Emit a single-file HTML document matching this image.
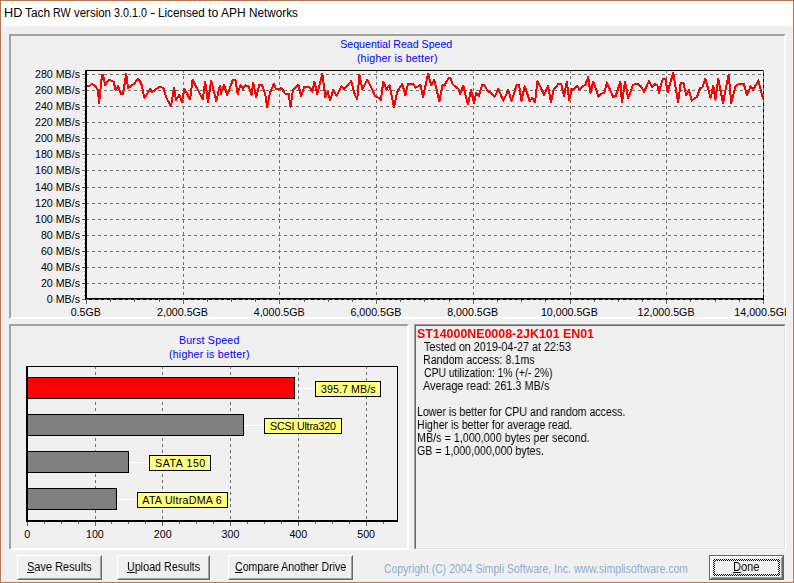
<!DOCTYPE html>
<html><head><meta charset="utf-8"><title>HD Tach RW version 3.0.1.0 - Licensed to APH Networks</title>
<style>
html,body{margin:0;padding:0}
body{width:794px;height:583px;position:relative;overflow:hidden;background:#f0f0f0;font-family:'Liberation Sans', sans-serif;}
div{position:absolute;box-sizing:border-box}
.t{white-space:pre;transform-origin:0 50%;}
u{text-decoration:underline;text-underline-offset:1px;text-decoration-thickness:1px}
#frame{left:0;top:0;width:794px;height:583px;border:1px solid #b97454;}
#halo{left:1px;top:26px;width:792px;height:556px;border:1px solid #f0f4f6;border-top:none}
#titlebar{left:1px;top:1px;width:792px;height:25px;background:#fff}
.panel{border-style:solid;border-width:2px;border-color:#a0a0a0 #fff #fff #a0a0a0}
.sunk{border-style:solid;border-width:1px;border-color:#a0a0a0 #fff #fff #a0a0a0}
.sunk>i{position:absolute;left:0;top:0;right:0;bottom:0;border-style:solid;border-width:1px;border-color:#696969 #e3e3e3 #e3e3e3 #696969}
svg{position:absolute;left:0;top:0}
.g{stroke:#707070;stroke-width:1;stroke-dasharray:3 3;shape-rendering:crispEdges}
.k{stroke:#666;stroke-width:1;shape-rendering:crispEdges}
.m{stroke:#909090;stroke-width:1;shape-rendering:crispEdges}
.bk{background:#000}
.bar{height:22px;border:1px solid #000;border-left:none}
.conn{height:1px;background:#fff}
.lbl{height:16px;border:1px solid #000;background:#ffff80}
.btn{border-style:solid;border-width:1px;border-color:#fff #696969 #696969 #fff;}
.btn>i{position:absolute;left:0;top:0;right:0;bottom:0;border-style:solid;border-width:1px;border-color:#f0f0f0 #a0a0a0 #a0a0a0 #f0f0f0}
</style></head><body>
<div id="titlebar"></div>
<div id="halo"></div>
<div id="frame"></div>

<div class="panel" style="left:9px;top:34px;width:777px;height:285px"></div>
<div class="panel" style="left:9px;top:324px;width:400px;height:226px"></div>
<div class="sunk" style="left:414px;top:324px;width:372px;height:226px"><i></i></div>

<svg width="794" height="583" viewBox="0 0 794 583">
<line x1="86" y1="74.5" x2="764" y2="74.5" class="g"/>
<line x1="82" y1="74.5" x2="85" y2="74.5" class="k"/>
<line x1="84" y1="78.5" x2="85" y2="78.5" class="m"/>
<line x1="84" y1="82.5" x2="85" y2="82.5" class="m"/>
<line x1="84" y1="86.5" x2="85" y2="86.5" class="m"/>
<line x1="86" y1="90.5" x2="764" y2="90.5" class="g"/>
<line x1="82" y1="90.5" x2="85" y2="90.5" class="k"/>
<line x1="84" y1="94.5" x2="85" y2="94.5" class="m"/>
<line x1="84" y1="98.5" x2="85" y2="98.5" class="m"/>
<line x1="84" y1="102.5" x2="85" y2="102.5" class="m"/>
<line x1="86" y1="106.5" x2="764" y2="106.5" class="g"/>
<line x1="82" y1="106.5" x2="85" y2="106.5" class="k"/>
<line x1="84" y1="110.5" x2="85" y2="110.5" class="m"/>
<line x1="84" y1="114.5" x2="85" y2="114.5" class="m"/>
<line x1="84" y1="118.5" x2="85" y2="118.5" class="m"/>
<line x1="86" y1="122.5" x2="764" y2="122.5" class="g"/>
<line x1="82" y1="122.5" x2="85" y2="122.5" class="k"/>
<line x1="84" y1="126.5" x2="85" y2="126.5" class="m"/>
<line x1="84" y1="130.5" x2="85" y2="130.5" class="m"/>
<line x1="84" y1="134.5" x2="85" y2="134.5" class="m"/>
<line x1="86" y1="138.5" x2="764" y2="138.5" class="g"/>
<line x1="82" y1="138.5" x2="85" y2="138.5" class="k"/>
<line x1="84" y1="142.5" x2="85" y2="142.5" class="m"/>
<line x1="84" y1="146.5" x2="85" y2="146.5" class="m"/>
<line x1="84" y1="150.5" x2="85" y2="150.5" class="m"/>
<line x1="86" y1="154.5" x2="764" y2="154.5" class="g"/>
<line x1="82" y1="154.5" x2="85" y2="154.5" class="k"/>
<line x1="84" y1="158.5" x2="85" y2="158.5" class="m"/>
<line x1="84" y1="162.5" x2="85" y2="162.5" class="m"/>
<line x1="84" y1="166.5" x2="85" y2="166.5" class="m"/>
<line x1="86" y1="170.5" x2="764" y2="170.5" class="g"/>
<line x1="82" y1="170.5" x2="85" y2="170.5" class="k"/>
<line x1="84" y1="175.5" x2="85" y2="175.5" class="m"/>
<line x1="84" y1="179.5" x2="85" y2="179.5" class="m"/>
<line x1="84" y1="183.5" x2="85" y2="183.5" class="m"/>
<line x1="86" y1="187.5" x2="764" y2="187.5" class="g"/>
<line x1="82" y1="187.5" x2="85" y2="187.5" class="k"/>
<line x1="84" y1="191.5" x2="85" y2="191.5" class="m"/>
<line x1="84" y1="195.5" x2="85" y2="195.5" class="m"/>
<line x1="84" y1="199.5" x2="85" y2="199.5" class="m"/>
<line x1="86" y1="203.5" x2="764" y2="203.5" class="g"/>
<line x1="82" y1="203.5" x2="85" y2="203.5" class="k"/>
<line x1="84" y1="207.5" x2="85" y2="207.5" class="m"/>
<line x1="84" y1="211.5" x2="85" y2="211.5" class="m"/>
<line x1="84" y1="215.5" x2="85" y2="215.5" class="m"/>
<line x1="86" y1="219.5" x2="764" y2="219.5" class="g"/>
<line x1="82" y1="219.5" x2="85" y2="219.5" class="k"/>
<line x1="84" y1="223.5" x2="85" y2="223.5" class="m"/>
<line x1="84" y1="227.5" x2="85" y2="227.5" class="m"/>
<line x1="84" y1="231.5" x2="85" y2="231.5" class="m"/>
<line x1="86" y1="235.5" x2="764" y2="235.5" class="g"/>
<line x1="82" y1="235.5" x2="85" y2="235.5" class="k"/>
<line x1="84" y1="239.5" x2="85" y2="239.5" class="m"/>
<line x1="84" y1="243.5" x2="85" y2="243.5" class="m"/>
<line x1="84" y1="247.5" x2="85" y2="247.5" class="m"/>
<line x1="86" y1="251.5" x2="764" y2="251.5" class="g"/>
<line x1="82" y1="251.5" x2="85" y2="251.5" class="k"/>
<line x1="84" y1="255.5" x2="85" y2="255.5" class="m"/>
<line x1="84" y1="259.5" x2="85" y2="259.5" class="m"/>
<line x1="84" y1="263.5" x2="85" y2="263.5" class="m"/>
<line x1="86" y1="267.5" x2="764" y2="267.5" class="g"/>
<line x1="82" y1="267.5" x2="85" y2="267.5" class="k"/>
<line x1="84" y1="271.5" x2="85" y2="271.5" class="m"/>
<line x1="84" y1="275.5" x2="85" y2="275.5" class="m"/>
<line x1="84" y1="279.5" x2="85" y2="279.5" class="m"/>
<line x1="86" y1="283.5" x2="764" y2="283.5" class="g"/>
<line x1="82" y1="283.5" x2="85" y2="283.5" class="k"/>
<line x1="84" y1="287.5" x2="85" y2="287.5" class="m"/>
<line x1="84" y1="291.5" x2="85" y2="291.5" class="m"/>
<line x1="84" y1="295.5" x2="85" y2="295.5" class="m"/>
<line x1="86" y1="299.5" x2="764" y2="299.5" class="g"/>
<line x1="82" y1="299.5" x2="85" y2="299.5" class="k"/>
<line x1="86.5" y1="300" x2="86.5" y2="304" class="k"/>
<line x1="110.5" y1="300" x2="110.5" y2="302" class="k"/>
<line x1="134.5" y1="300" x2="134.5" y2="302" class="k"/>
<line x1="159.5" y1="300" x2="159.5" y2="302" class="k"/>
<line x1="183.5" y1="70" x2="183.5" y2="298" class="g"/>
<line x1="183.5" y1="300" x2="183.5" y2="304" class="k"/>
<line x1="207.5" y1="300" x2="207.5" y2="302" class="k"/>
<line x1="231.5" y1="300" x2="231.5" y2="302" class="k"/>
<line x1="255.5" y1="300" x2="255.5" y2="302" class="k"/>
<line x1="279.5" y1="70" x2="279.5" y2="298" class="g"/>
<line x1="279.5" y1="300" x2="279.5" y2="304" class="k"/>
<line x1="304.5" y1="300" x2="304.5" y2="302" class="k"/>
<line x1="328.5" y1="300" x2="328.5" y2="302" class="k"/>
<line x1="352.5" y1="300" x2="352.5" y2="302" class="k"/>
<line x1="376.5" y1="70" x2="376.5" y2="298" class="g"/>
<line x1="376.5" y1="300" x2="376.5" y2="304" class="k"/>
<line x1="400.5" y1="300" x2="400.5" y2="302" class="k"/>
<line x1="424.5" y1="300" x2="424.5" y2="302" class="k"/>
<line x1="449.5" y1="300" x2="449.5" y2="302" class="k"/>
<line x1="473.5" y1="70" x2="473.5" y2="298" class="g"/>
<line x1="473.5" y1="300" x2="473.5" y2="304" class="k"/>
<line x1="497.5" y1="300" x2="497.5" y2="302" class="k"/>
<line x1="521.5" y1="300" x2="521.5" y2="302" class="k"/>
<line x1="545.5" y1="300" x2="545.5" y2="302" class="k"/>
<line x1="570.5" y1="70" x2="570.5" y2="298" class="g"/>
<line x1="570.5" y1="300" x2="570.5" y2="304" class="k"/>
<line x1="594.5" y1="300" x2="594.5" y2="302" class="k"/>
<line x1="618.5" y1="300" x2="618.5" y2="302" class="k"/>
<line x1="642.5" y1="300" x2="642.5" y2="302" class="k"/>
<line x1="666.5" y1="70" x2="666.5" y2="298" class="g"/>
<line x1="666.5" y1="300" x2="666.5" y2="304" class="k"/>
<line x1="690.5" y1="300" x2="690.5" y2="302" class="k"/>
<line x1="715.5" y1="300" x2="715.5" y2="302" class="k"/>
<line x1="739.5" y1="300" x2="739.5" y2="302" class="k"/>
<line x1="763.5" y1="300" x2="763.5" y2="304" class="k"/>
<line x1="95.5" y1="366" x2="95.5" y2="520" class="g"/>
<line x1="162.5" y1="366" x2="162.5" y2="520" class="g"/>
<line x1="230.5" y1="366" x2="230.5" y2="520" class="g"/>
<line x1="298.5" y1="366" x2="298.5" y2="520" class="g"/>
<line x1="366.5" y1="366" x2="366.5" y2="520" class="g"/>
<line x1="27.5" y1="522" x2="27.5" y2="526" class="k"/>
<line x1="44.5" y1="522" x2="44.5" y2="524" class="k"/>
<line x1="61.5" y1="522" x2="61.5" y2="524" class="k"/>
<line x1="78.5" y1="522" x2="78.5" y2="524" class="k"/>
<line x1="95.5" y1="522" x2="95.5" y2="526" class="k"/>
<line x1="111.5" y1="522" x2="111.5" y2="524" class="k"/>
<line x1="128.5" y1="522" x2="128.5" y2="524" class="k"/>
<line x1="145.5" y1="522" x2="145.5" y2="524" class="k"/>
<line x1="162.5" y1="522" x2="162.5" y2="526" class="k"/>
<line x1="179.5" y1="522" x2="179.5" y2="524" class="k"/>
<line x1="196.5" y1="522" x2="196.5" y2="524" class="k"/>
<line x1="213.5" y1="522" x2="213.5" y2="524" class="k"/>
<line x1="230.5" y1="522" x2="230.5" y2="526" class="k"/>
<line x1="247.5" y1="522" x2="247.5" y2="524" class="k"/>
<line x1="264.5" y1="522" x2="264.5" y2="524" class="k"/>
<line x1="281.5" y1="522" x2="281.5" y2="524" class="k"/>
<line x1="298.5" y1="522" x2="298.5" y2="526" class="k"/>
<line x1="315.5" y1="522" x2="315.5" y2="524" class="k"/>
<line x1="332.5" y1="522" x2="332.5" y2="524" class="k"/>
<line x1="349.5" y1="522" x2="349.5" y2="524" class="k"/>
<line x1="366.5" y1="522" x2="366.5" y2="526" class="k"/>
<line x1="383.5" y1="522" x2="383.5" y2="524" class="k"/>
</svg>

<!-- chart 1 axes -->
<div class="bk" style="left:85px;top:70px;width:679px;height:1px"></div>
<div class="bk" style="left:85px;top:70px;width:2px;height:230px"></div>
<div class="bk" style="left:85px;top:298px;width:679px;height:2px"></div>
<div class="bk" style="left:763px;top:70px;width:1px;height:230px"></div>

<svg width="794" height="583" viewBox="0 0 794 583">
<line x1="86" y1="299.5" x2="764" y2="299.5" class="g"/>
<line x1="763.5" y1="70" x2="763.5" y2="298" class="g"/>
<clipPath id="cp"><rect x="87" y="71" width="677" height="227"/></clipPath>
<polyline points="84.0,85.9 89.7,85.9 91.8,83.6 95.3,86.2 97.9,89.9 99.1,103.2 102.0,74.8 103.1,75.1 105.2,84.9 109.2,79.6 113.6,81.7 115.5,89.7 118.0,86.2 121.2,94.0 123.0,94.0 126.2,73.8 128.1,88.0 134.4,83.6 138.2,78.6 141.3,83.6 144.5,98.1 150.1,88.9 152.0,92.2 159.6,86.8 163.3,88.0 166.5,98.1 170.9,106.1 174.1,87.7 175.9,99.8 179.1,95.2 180.0,96.2 181.9,102.3 184.4,88.7 190.1,99.4 192.6,79.6 202.7,99.4 205.2,81.7 208.0,101.9 211.2,80.9 216.3,101.3 219.7,85.9 220.9,94.0 224.1,84.9 227.2,95.2 232.9,79.6 235.4,79.6 237.7,94.0 240.5,84.9 243.0,88.7 245.5,85.5 248.6,86.2 251.5,95.2 253.3,83.0 256.2,97.2 259.3,84.9 261.9,84.9 265.0,93.1 267.2,106.9 270.1,92.4 273.8,83.9 276.0,88.9 281.7,88.4 284.8,93.5 288.6,93.5 290.5,106.9 293.0,89.9 298.4,84.9 301.2,96.2 304.3,86.8 309.4,86.8 312.3,91.8 314.4,81.7 317.3,94.0 322.3,73.8 325.4,97.2 327.6,91.8 330.2,100.0 333.3,89.9 336.5,96.2 341.5,85.9 344.0,89.3 351.3,81.1 354.7,94.3 357.2,99.4 359.4,74.8 362.3,89.3 367.3,79.6 371.1,87.4 372.0,88.7 375.1,96.2 377.7,97.2 380.8,100.0 383.3,81.7 386.5,89.3 389.6,85.5 394.0,106.9 397.2,91.8 402.2,83.9 405.4,95.2 407.9,84.3 412.9,83.6 415.8,87.7 420.5,84.9 423.0,97.2 428.0,73.8 431.2,84.9 434.3,79.9 439.4,101.3 442.5,84.9 444.4,85.5 448.8,77.6 450.7,78.3 452.6,84.3 458.9,89.3 460.2,94.0 463.3,85.5 467.1,101.3 468.0,103.8 471.1,89.9 474.0,103.2 476.2,93.1 478.7,96.2 482.1,84.9 484.4,84.9 487.5,91.2 490.7,92.2 494.7,96.9 498.2,88.9 503.3,100.6 508.3,89.9 511.5,101.3 516.5,85.5 519.0,84.9 521.5,100.6 524.7,86.2 529.7,101.0 532.2,98.1 535.0,101.9 537.5,80.9 544.2,95.0 548.0,86.2 551.1,102.5 553.6,89.9 558.7,83.6 561.2,83.9 563.5,94.3 564.0,96.2 566.8,81.7 569.3,100.3 571.8,89.3 574.1,88.9 577.2,85.9 579.7,89.9 582.9,86.2 585.4,84.9 588.2,76.7 590.4,93.1 593.2,81.7 598.6,96.9 601.8,93.5 604.3,93.1 606.8,82.4 613.1,96.9 615.6,96.2 620.4,81.7 621.9,102.5 625.1,81.7 628.2,98.1 633.0,84.9 637.0,83.6 640.8,86.2 644.0,91.8 649.0,81.1 652.2,87.4 654.7,84.3 657.2,84.9 659.1,93.1 660.0,88.2 662.8,79.2 665.5,79.2 667.6,92.3 673.2,72.7 678.0,102.3 680.8,82.6 683.3,82.6 686.3,95.1 689.1,90.2 691.6,100.6 697.1,96.8 700.2,87.5 702.3,87.5 705.4,78.7 710.6,98.1 713.3,86.1 715.4,99.9 718.2,78.7 723.0,103.1 728.6,74.6 731.3,103.1 735.5,86.1 739.0,83.7 743.8,84.0 747.0,95.1 750.7,86.1 753.1,89.8 758.4,80.5 763.2,99.3" fill="none" stroke="#ff0000" stroke-width="2" stroke-linejoin="round" shape-rendering="crispEdges" clip-path="url(#cp)"/>
</svg>

<!-- chart 2 axes -->
<div class="bk" style="left:26px;top:366px;width:372px;height:1px"></div>
<div class="bk" style="left:26px;top:366px;width:2px;height:156px"></div>
<div class="bk" style="left:26px;top:520px;width:372px;height:2px"></div>
<div class="bk" style="left:397px;top:366px;width:1px;height:156px"></div>
<div class="bar" style="left:28px;top:377px;width:267px;background:#ff0000"></div>
<div class="conn" style="left:295px;top:388px;width:20px"></div>
<div class="lbl" style="left:315px;top:381px;width:66px"></div>
<div class="bar" style="left:28px;top:414px;width:216px;background:#808080"></div>
<div class="conn" style="left:244px;top:425px;width:20px"></div>
<div class="lbl" style="left:264px;top:418px;width:78px"></div>
<div class="bar" style="left:28px;top:451px;width:101px;background:#808080"></div>
<div class="conn" style="left:129px;top:462px;width:20px"></div>
<div class="lbl" style="left:149px;top:455px;width:62px"></div>
<div class="bar" style="left:28px;top:488px;width:89px;background:#808080"></div>
<div class="conn" style="left:117px;top:499px;width:20px"></div>
<div class="lbl" style="left:137px;top:492px;width:91px"></div>

<!-- buttons -->
<div class="btn" style="left:17px;top:555px;width:85px;height:25px"><i></i></div>
<div class="btn" style="left:117px;top:555px;width:93px;height:25px"><i></i></div>
<div class="btn" style="left:228px;top:555px;width:125px;height:25px"><i></i></div>
<div style="left:709px;top:555px;width:75px;height:25px;border:1px solid #646464"></div>
<div class="btn" style="left:710px;top:556px;width:73px;height:23px"><i></i></div>
<div style="left:713px;top:559px;width:67px;height:17px;background:repeating-conic-gradient(#000 0 25%,transparent 0 50%) 0 0/2px 2px"></div>
<div style="left:715px;top:561px;width:63px;height:13px;background:#f0f0f0"></div>

<div id="clip" style="left:0;top:0;width:786px;height:583px;overflow:hidden">
<div class="t" style="font-size:12px;line-height:16px;color:#000;transform:scaleX(1.0540);left:4.05px;top:4.84px;">HD</div>
<div class="t" style="font-size:12px;line-height:16px;color:#000;transform:scaleX(0.9897);left:24.85px;top:4.84px;">Tach</div>
<div class="t" style="font-size:12px;line-height:16px;color:#000;transform:scaleX(0.8960);left:52.60px;top:4.84px;">RW</div>
<div class="t" style="font-size:12px;line-height:16px;color:#000;transform:scaleX(0.9553);left:73.70px;top:4.84px;">version</div>
<div class="t" style="font-size:12px;line-height:16px;color:#000;transform:scaleX(0.8979);left:113.85px;top:4.84px;">3.0.1.0</div>
<div class="t" style="font-size:12px;line-height:16px;color:#000;transform:scaleX(1.3333);left:150.43px;top:4.84px;">-</div>
<div class="t" style="font-size:12px;line-height:16px;color:#000;transform:scaleX(0.9730);left:158.13px;top:4.84px;">Licensed</div>
<div class="t" style="font-size:12px;line-height:16px;color:#000;transform:scaleX(1.0270);left:207.84px;top:4.84px;">to</div>
<div class="t" style="font-size:12px;line-height:16px;color:#000;transform:scaleX(0.9937);left:221.20px;top:4.84px;">APH</div>
<div class="t" style="font-size:12px;line-height:16px;color:#000;transform:scaleX(0.9773);left:248.82px;top:4.84px;">Networks</div>
<div class="t" style="font-size:10.67px;line-height:14px;color:#0000ff;letter-spacing:-0.025px;left:340.20px;top:37.30px;">Sequential Read Speed</div>
<div class="t" style="font-size:10.67px;line-height:14px;color:#0000ff;letter-spacing:0.179px;left:356.90px;top:51.30px;">(higher is better)</div>
<div class="t" style="font-size:10.67px;line-height:14px;color:#000;left:34.98px;top:67.30px;">280 MB/s</div>
<div class="t" style="font-size:10.67px;line-height:14px;color:#000;left:34.98px;top:83.30px;">260 MB/s</div>
<div class="t" style="font-size:10.67px;line-height:14px;color:#000;left:34.98px;top:99.30px;">240 MB/s</div>
<div class="t" style="font-size:10.67px;line-height:14px;color:#000;left:34.98px;top:115.30px;">220 MB/s</div>
<div class="t" style="font-size:10.67px;line-height:14px;color:#000;left:34.98px;top:131.30px;">200 MB/s</div>
<div class="t" style="font-size:10.67px;line-height:14px;color:#000;left:34.98px;top:147.30px;">180 MB/s</div>
<div class="t" style="font-size:10.67px;line-height:14px;color:#000;left:34.98px;top:163.30px;">160 MB/s</div>
<div class="t" style="font-size:10.67px;line-height:14px;color:#000;left:34.98px;top:180.30px;">140 MB/s</div>
<div class="t" style="font-size:10.67px;line-height:14px;color:#000;left:34.98px;top:196.30px;">120 MB/s</div>
<div class="t" style="font-size:10.67px;line-height:14px;color:#000;left:34.98px;top:212.30px;">100 MB/s</div>
<div class="t" style="font-size:10.67px;line-height:14px;color:#000;left:40.91px;top:228.30px;">80 MB/s</div>
<div class="t" style="font-size:10.67px;line-height:14px;color:#000;left:40.91px;top:244.30px;">60 MB/s</div>
<div class="t" style="font-size:10.67px;line-height:14px;color:#000;left:40.91px;top:260.30px;">40 MB/s</div>
<div class="t" style="font-size:10.67px;line-height:14px;color:#000;left:40.91px;top:276.30px;">20 MB/s</div>
<div class="t" style="font-size:10.67px;line-height:14px;color:#000;left:46.83px;top:292.30px;">0 MB/s</div>
<div class="t" style="font-size:10.67px;line-height:14px;color:#000;left:70.69px;top:305.30px;">0.5GB</div>
<div class="t" style="font-size:10.67px;line-height:14px;color:#000;left:157.03px;top:305.30px;">2,000.5GB</div>
<div class="t" style="font-size:10.67px;line-height:14px;color:#000;left:253.74px;top:305.30px;">4,000.5GB</div>
<div class="t" style="font-size:10.67px;line-height:14px;color:#000;left:350.45px;top:305.30px;">6,000.5GB</div>
<div class="t" style="font-size:10.67px;line-height:14px;color:#000;left:447.16px;top:305.30px;">8,000.5GB</div>
<div class="t" style="font-size:10.67px;line-height:14px;color:#000;left:540.90px;top:305.30px;">10,000.5GB</div>
<div class="t" style="font-size:10.67px;line-height:14px;color:#000;left:637.61px;top:305.30px;">12,000.5GB</div>
<div class="t" style="font-size:10.67px;line-height:14px;color:#000;left:734.32px;top:305.30px;">14,000.5GB</div>
<div class="t" style="font-size:10.67px;line-height:14px;color:#0000ff;letter-spacing:0.185px;left:178.90px;top:333.30px;">Burst Speed</div>
<div class="t" style="font-size:10.67px;line-height:14px;color:#0000ff;letter-spacing:0.179px;left:169.00px;top:347.30px;">(higher is better)</div>
<div class="t" style="font-size:10.67px;line-height:14px;color:#000;left:24.13px;top:527.30px;">0</div>
<div class="t" style="font-size:10.67px;line-height:14px;color:#000;left:86.01px;top:527.30px;">100</div>
<div class="t" style="font-size:10.67px;line-height:14px;color:#000;left:153.81px;top:527.30px;">200</div>
<div class="t" style="font-size:10.67px;line-height:14px;color:#000;left:221.61px;top:527.30px;">300</div>
<div class="t" style="font-size:10.67px;line-height:14px;color:#000;left:289.41px;top:527.30px;">400</div>
<div class="t" style="font-size:10.67px;line-height:14px;color:#000;left:357.21px;top:527.30px;">500</div>
<div class="t" style="font-size:10.67px;line-height:14px;color:#000;letter-spacing:0.089px;left:320.90px;top:382.30px;">395.7 MB/s</div>
<div class="t" style="font-size:10.67px;line-height:14px;color:#000;letter-spacing:-0.196px;left:270.10px;top:419.30px;">SCSI Ultra320</div>
<div class="t" style="font-size:10.67px;line-height:14px;color:#000;letter-spacing:0.557px;left:155.00px;top:456.30px;">SATA 150</div>
<div class="t" style="font-size:10.67px;line-height:14px;color:#000;letter-spacing:0.269px;left:142.30px;top:493.30px;">ATA UltraDMA 6</div>
<div class="t" style="font-size:12px;line-height:16px;color:#ff0000;font-weight:700;transform:scaleX(1.0323);will-change:transform;left:416.88px;top:325.84px;">ST14000NE0008-2JK101 EN01</div>
<div class="t" style="font-size:12px;line-height:16px;color:#000;transform:scaleX(0.8995);will-change:transform;left:423.78px;top:338.84px;">Tested on 2019-04-27 at 22:53</div>
<div class="t" style="font-size:12px;line-height:16px;color:#000;transform:scaleX(0.8895);will-change:transform;left:423.11px;top:351.84px;">Random access: 8.1ms</div>
<div class="t" style="font-size:12px;line-height:16px;color:#000;transform:scaleX(0.8623);will-change:transform;left:423.57px;top:364.84px;">CPU utilization: 1% (+/- 2%)</div>
<div class="t" style="font-size:12px;line-height:16px;color:#000;transform:scaleX(0.9081);will-change:transform;left:423.00px;top:377.84px;">Average read: 261.3 MB/s</div>
<div class="t" style="font-size:12px;line-height:16px;color:#000;transform:scaleX(0.8825);will-change:transform;left:416.92px;top:403.84px;">Lower is better for CPU and random access.</div>
<div class="t" style="font-size:12px;line-height:16px;color:#000;transform:scaleX(0.8822);will-change:transform;left:416.92px;top:416.84px;">Higher is better for average read.</div>
<div class="t" style="font-size:12px;line-height:16px;color:#000;transform:scaleX(0.8971);will-change:transform;left:416.90px;top:429.84px;">MB/s = 1,000,000 bytes per second.</div>
<div class="t" style="font-size:12px;line-height:16px;color:#000;transform:scaleX(0.8862);will-change:transform;left:417.36px;top:442.84px;">GB = 1,000,000,000 bytes.</div>
<div class="t" style="font-size:12px;line-height:16px;color:#000;transform:scaleX(0.9147);will-change:transform;left:27.34px;top:558.84px;"><u>S</u>ave Results</div>
<div class="t" style="font-size:12px;line-height:16px;color:#000;transform:scaleX(0.8975);will-change:transform;left:126.50px;top:558.84px;"><u>U</u>pload Results</div>
<div class="t" style="font-size:12px;line-height:16px;color:#000;transform:scaleX(0.8869);will-change:transform;left:234.66px;top:558.84px;"><u>C</u>ompare Another Drive</div>
<div class="t" style="font-size:12px;line-height:16px;color:#000;transform:scaleX(0.9248);will-change:transform;left:732.88px;top:558.84px;"><u>D</u>one</div>
<div class="t" style="font-size:12px;line-height:16px;color:#8aa8d2;transform:scaleX(0.8738);will-change:transform;left:384.36px;top:560.84px;">Copyright (C) 2004 Simpli Software, Inc. www.simplisoftware.com</div>
</div>
</body></html>
